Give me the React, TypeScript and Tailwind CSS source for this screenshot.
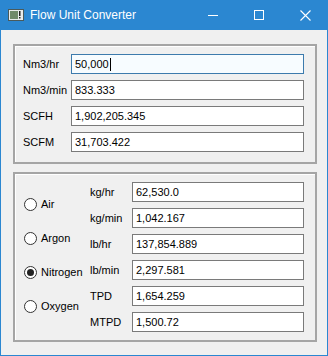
import { useState } from "react"

const font = { fontFamily: '"Liberation Sans", Arial, sans-serif' }

function Field({ value, focused = false }: { value: string; focused?: boolean }) {
  return (
    <div
      className={`h-[20px] flex-1 flex items-center px-[3px] text-[11px] text-black border ${
        focused ? "border-[#3d7bad] bg-[#f7fcff]" : "border-[#7a7a7a] bg-white"
      }`}
    >
      <span>{value}</span>
      {focused && <span className="w-px h-[13px] bg-black ml-px" />}
    </div>
  )
}

function Radio({ label, checked, onSelect }: { label: string; checked: boolean; onSelect: () => void }) {
  return (
    <button type="button" onClick={onSelect} className="h-[14px] flex items-center gap-[4px] text-[11px] text-black">
      <span className="w-[13px] h-[13px] rounded-full border border-[#333] bg-white flex items-center justify-center">
        {checked && <span className="w-[7px] h-[7px] rounded-full bg-[#222]" />}
      </span>
      <span>{label}</span>
    </button>
  )
}

export default function App() {
  const [gas, setGas] = useState("Nitrogen")

  const volume = [
    ["Nm3/hr", "50,000"],
    ["Nm3/min", "833.333"],
    ["SCFH", "1,902,205.345"],
    ["SCFM", "31,703.422"],
  ]
  const mass = [
    ["kg/hr", "62,530.0"],
    ["kg/min", "1,042.167"],
    ["lb/hr", "137,854.889"],
    ["lb/min", "2,297.581"],
    ["TPD", "1,654.259"],
    ["MTPD", "1,500.72"],
  ]

  return (
    <div className="w-[328px] h-[356px] flex flex-col bg-[#f0f0f0] border-x border-b border-[#2b87d1]" style={font}>
      {/* title bar */}
      <div className="h-[30px] shrink-0 -mx-px bg-[#2b87d1] flex items-center text-white">
        <svg width="16" height="12" viewBox="0 0 16 12" className="ml-[8px]">
          <rect x="0.5" y="0.5" width="15" height="11" fill="#e8ecec" stroke="#4a5a5a" />
          <rect x="2" y="2" width="8" height="8" fill="#6f8a6a" />
          <rect x="11" y="2" width="1.5" height="5" fill="#222" />
          <rect x="11" y="8" width="1.5" height="1.5" fill="#222" />
        </svg>
        <span className="ml-[6px] text-[12px]">Flow Unit Converter</span>
        <div className="ml-auto flex h-full">
          <div className="w-[46px] h-full flex items-center justify-center">
            <span className="w-[10px] h-px bg-white" />
          </div>
          <div className="w-[46px] h-full flex items-center justify-center">
            <span className="w-[10px] h-[10px] border border-white" />
          </div>
          <div className="w-[46px] h-full flex items-center justify-center">
            <svg width="11" height="11" viewBox="0 0 11 11">
              <path d="M0.5 0.5L10.5 10.5M10.5 0.5L0.5 10.5" stroke="white" strokeWidth="1.1" />
            </svg>
          </div>
        </div>
      </div>

      <div className="flex flex-col gap-[8px] pt-[14px] pl-[12px] pr-[10px]">
        {/* volume group */}
        <div className="h-[120px] border-2 border-[#a5a5a5] shadow-[inset_1px_1px_0_#fff] pt-[8px] pl-[8px] pr-[11px] flex flex-col gap-[6px]">
          {volume.map(([label, value], i) => (
            <div key={label} className="flex items-center">
              <span className="w-[48px] text-[11px] text-black">{label}</span>
              <Field value={value} focused={i === 0} />
            </div>
          ))}
        </div>

        {/* mass group */}
        <div className="h-[170px] border-2 border-[#a5a5a5] shadow-[inset_1px_1px_0_#fff] pt-[8px] pl-[9px] pr-[11px] flex">
          <div className="w-[66px] flex flex-col items-start gap-[20px] pt-[15px]">
            {["Air", "Argon", "Nitrogen", "Oxygen"].map((g) => (
              <Radio key={g} label={g} checked={gas === g} onSelect={() => setGas(g)} />
            ))}
          </div>
          <div className="flex-1 flex flex-col gap-[6px]">
            {mass.map(([label, value]) => (
              <div key={label} className="flex items-center">
                <span className="w-[42px] text-[11px] text-black">{label}</span>
                <Field value={value} />
              </div>
            ))}
          </div>
        </div>
      </div>
    </div>
  )
}
